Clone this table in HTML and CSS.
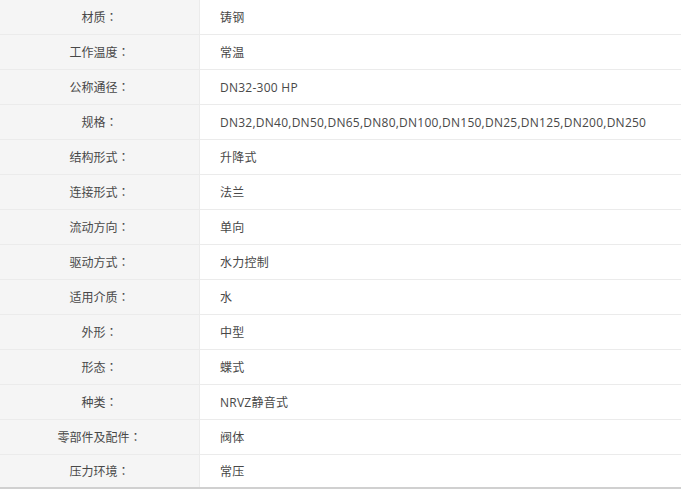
FILE: index.html
```html
<!DOCTYPE html>
<html lang="zh-CN">
<head>
    <meta charset="UTF-8">
    <meta name="viewport" content="width=device-width, initial-scale=1.0">
    <title>产品参数</title>
    <link rel="stylesheet" href="styles.css">
</head>
<body>
    <table class="params">
        <tr><th>材质<span class="colon">：</span></th><td>铸钢</td></tr>
        <tr><th>工作温度<span class="colon">：</span></th><td>常温</td></tr>
        <tr><th>公称通径<span class="colon">：</span></th><td>DN32-300 HP</td></tr>
        <tr><th>规格<span class="colon">：</span></th><td>DN32,DN40,DN50,DN65,DN80,DN100,DN150,DN25,DN125,DN200,DN250</td></tr>
        <tr><th>结构形式<span class="colon">：</span></th><td>升降式</td></tr>
        <tr><th>连接形式<span class="colon">：</span></th><td>法兰</td></tr>
        <tr><th>流动方向<span class="colon">：</span></th><td>单向</td></tr>
        <tr><th>驱动方式<span class="colon">：</span></th><td>水力控制</td></tr>
        <tr><th>适用介质<span class="colon">：</span></th><td>水</td></tr>
        <tr><th>外形<span class="colon">：</span></th><td>中型</td></tr>
        <tr><th>形态<span class="colon">：</span></th><td>蝶式</td></tr>
        <tr><th>种类<span class="colon">：</span></th><td>NRVZ静音式</td></tr>
        <tr><th>零部件及配件<span class="colon">：</span></th><td>阀体</td></tr>
        <tr class="last"><th>压力环境<span class="colon">：</span></th><td>常压</td></tr>
    </table>
</body>
</html>
```

FILE: styles.css
```css
body {
    margin: 0;
    background-color: #fff;
    font-family: "Open Sans", "Noto Sans CJK SC", sans-serif;
    font-size: 12px;
    color: #484848;
}
.params {
    width: 681px;
    border-collapse: collapse;
}
.params th,
.params td {
    height: 34px;
    padding: 0;
    border-bottom: 1px solid #ebebeb;
    vertical-align: middle;
}
.params th {
    width: 199px;
    font-weight: normal;
    text-align: center;
    background-color: #f5f5f5;
    border-right: 1px solid #ebebeb;
}
.params td {
    padding-left: 20px;
    text-align: left;
    letter-spacing: 0.25px;
}
.params .last th,
.params .last td {
    height: 32px;
    border-bottom: 2px solid #d0d0d0;
}
/* centred full-width colon, like YaHei */
.colon {
    font-family: "Noto Sans CJK TC", sans-serif;
    font-feature-settings: "locl" 0;
}
```
